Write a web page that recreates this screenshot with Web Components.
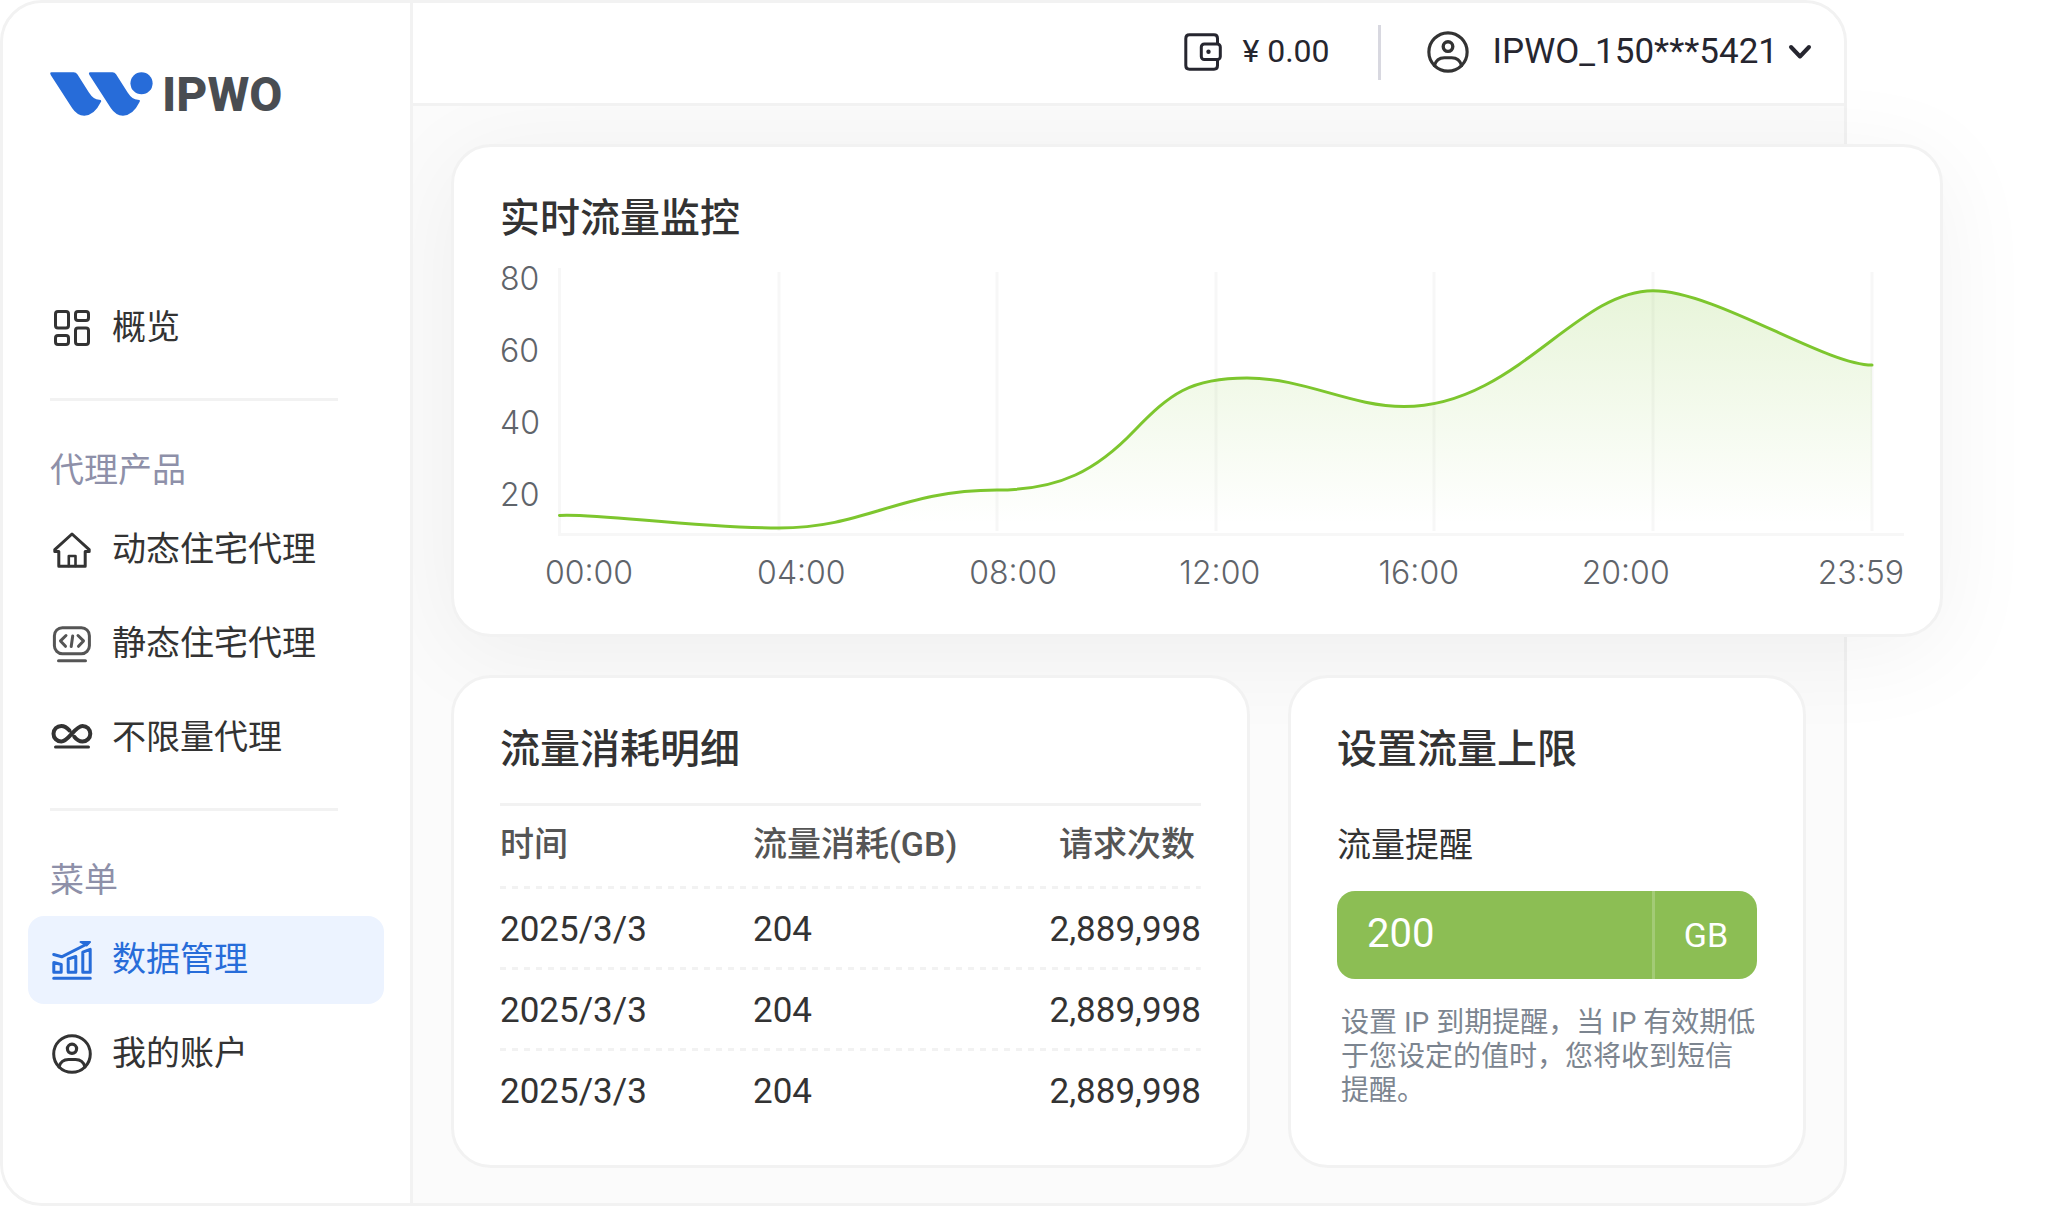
<!DOCTYPE html>
<html lang="zh-CN">
<head>
<meta charset="UTF-8">
<meta name="viewport" content="width=device-width, initial-scale=1.0">
<title>IPWO</title>
<style>
    body {
        --line: #f2f2f2;
        --blue: #276cd9;
        --green: #8cbe54;
        margin: 0;
        background: #fff;
        color: #333;
        font-family: Roboto, "Noto Sans CJK SC", sans-serif;
        font-size: 34px;
        line-height: 48px;
    }
</style>
</head>
<body>
<app-shell>
    <app-sidebar slot="sidebar"></app-sidebar>
    <app-header slot="header"></app-header>
    <panel-card heading="实时流量监控" wide><traffic-chart></traffic-chart></panel-card>
    <panel-card heading="流量消耗明细"><usage-table></usage-table></panel-card>
    <panel-card heading="设置流量上限"><limit-form></limit-form></panel-card>
</app-shell>

<script>
const USER_ICON = `
    <circle cx="22" cy="22" r="18.3"/>
    <circle cx="22" cy="16.8" r="4.6" stroke-width="3.2"/>
    <path d="M9 35C10.5 29.5 14.5 27.5 18.5 27.5h7C29.5 27.5 33.5 29.5 35 35"/>`;

const ICONS = {
    grid: `
        <rect x="5.5" y="5.5" width="13" height="16.5" rx="2.5"/>
        <rect x="5.5" y="29.5" width="13" height="9" rx="2.5"/>
        <rect x="25.5" y="5.5" width="13" height="9" rx="2.5"/>
        <rect x="25.5" y="22" width="13" height="16.5" rx="2.5"/>`,
    home: `
        <path d="M22 6L4.8 21.6V23.5H8.8V38.2H35.2V23.5H39.2V21.6Z"/>
        <path d="M18.8 38V28H25.5V38" stroke-width="2.6"/>`,
    code: `
        <g stroke="#555">
            <rect x="4.4" y="5.7" width="35" height="26" rx="8"/>
            <path d="M16 13.5L10.5 18.9L15.5 24.3M28 13.5L33.5 18.9L28.5 24.3M22.7 14L21.2 24.5M8.5 38.7H35.5"/>
        </g>`,
    infinity: `
        <path stroke-width="4" d="M19.5 14.5C17 11.5 14.5 9.9 11.3 9.9a7.8 7.8 0 0 0 0 15.6C18.5 25.5 25 9.9 32.5 9.9a7.8 7.8 0 0 1 0 15.6C29 25.5 26.5 23.7 24.3 20.8"/>
        <path d="M5.5 31H38.5"/>`,
    chart: `
        <path d="M3.8 24.5L11.2 26.5V34.2H3.8ZM18.2 21L25.8 18.5V34.2H18.2ZM32.8 14.2L40.2 11.3V34.2H32.8Z"/>
        <path d="M3.7 40.3H40.3M3.7 16.5L11.7 18.8L37 6"/>
        <path d="M30.5 4H40L36.5 7.5Z" fill="currentColor" stroke-width="2"/>`,
    user: USER_ICON
};

class AppShell extends HTMLElement {
    connectedCallback() {
        this.attachShadow({ mode: 'open' });
        this.shadowRoot.innerHTML = `
            <style>
                :host {
                    display: grid;
                    grid-template-columns: 410px 1fr;
                    box-sizing: border-box;
                    min-height: 100vh;
                    margin-right: 203px;
                    border: 3px solid var(--line);
                    border-radius: 42px;
                    background: #fbfbfb;
                }
                .content { display: flex; flex-direction: column; min-width: 0; }
                main {
                    flex: 1;
                    display: grid;
                    grid-template-columns: 799fr 518fr;
                    grid-auto-rows: 1fr;
                    gap: 38px;
                    padding: 38px 38px 35px;
                }
            </style>
            <slot name="sidebar"></slot>
            <div class="content">
                <slot name="header"></slot>
                <main><slot></slot></main>
            </div>
        `;
    }
}

class BrandLogo extends HTMLElement {
    connectedCallback() {
        this.attachShadow({ mode: 'open' });
        this.shadowRoot.innerHTML = `
            <style>
                :host { display: flex; gap: 9px; color: #494d52; font-size: 48px; font-weight: 800; line-height: 46px; }
                svg { width: 103px; height: 44px; }
            </style>
            <svg viewBox="150 215 310 133" fill="#276cd9" aria-hidden="true">
                <path id="stroke" d="M154 216H221Q228 216 232 222L267 277Q281 299 298 299Q307 299 303 306Q283 347 253 347Q231 347 216 324L152 225Q147 216 154 216Z"/>
                <use href="#stroke" x="117"/>
                <circle cx="426" cy="249" r="33.5"/>
            </svg>
            <span>IPWO</span>
        `;
    }
}

class NavItem extends HTMLElement {
    connectedCallback() {
        const active = this.hasAttribute('active');
        this.attachShadow({ mode: 'open' });
        this.shadowRoot.innerHTML = `
            <style>
                :host { display: block; }
                a {
                    display: flex;
                    align-items: center;
                    gap: 18px;
                    height: 88px;
                    padding-left: 22px;
                    border-radius: 16px;
                    color: inherit;
                    text-decoration: none;
                }
                a[aria-current] { background: #ecf3ff; color: var(--blue); }
                svg { width: 44px; height: 44px; flex: none; }
                span { padding-bottom: 3px; }
            </style>
            <a href="#${this.getAttribute('icon')}" ${active ? 'aria-current="page"' : ''}>
                <svg viewBox="0 0 44 44" fill="none" stroke="currentColor" stroke-width="3" stroke-linecap="round" stroke-linejoin="round" aria-hidden="true">${ICONS[this.getAttribute('icon')]}</svg>
                <span><slot></slot></span>
            </a>
        `;
    }
}

class AppSidebar extends HTMLElement {
    connectedCallback() {
        this.attachShadow({ mode: 'open' });
        this.shadowRoot.innerHTML = `
            <style>
                :host {
                    position: relative;
                    z-index: 1;
                    box-sizing: border-box;
                    padding: 69px 26px 0 25px;
                    border-right: 3px solid var(--line);
                    border-radius: 39px 0 0 39px;
                    background: #fff;
                }
                brand-logo { margin: 0 22px 166px; }
                nav { display: flex; flex-direction: column; gap: 6px; }
                hr { margin: 26px 46px 45px 22px; border: 0; height: 3px; background: var(--line); }
                h2 { margin: 0 22px 12px; color: #8e90a9; font-size: 34px; font-weight: 400; line-height: 48px; }
            </style>
            <brand-logo></brand-logo>
            <nav><nav-item icon="grid">概览</nav-item></nav>
            <hr>
            <h2>代理产品</h2>
            <nav>
                <nav-item icon="home">动态住宅代理</nav-item>
                <nav-item icon="code">静态住宅代理</nav-item>
                <nav-item icon="infinity">不限量代理</nav-item>
            </nav>
            <hr>
            <h2>菜单</h2>
            <nav>
                <nav-item icon="chart" active>数据管理</nav-item>
                <nav-item icon="user">我的账户</nav-item>
            </nav>
        `;
    }
}

class AppHeader extends HTMLElement {
    connectedCallback() {
        this.attachShadow({ mode: 'open' });
        this.shadowRoot.innerHTML = `
            <style>
                :host {
                    position: relative;
                    z-index: 1;
                    display: flex;
                    align-items: center;
                    justify-content: flex-end;
                    box-sizing: border-box;
                    height: 103px;
                    padding: 0 32px 2px 0;
                    border-bottom: 3px solid var(--line);
                    border-radius: 0 39px 0 0;
                    background: #fff;
                    color: #26262f;
                }
                svg { flex: none; }
                .balance { display: flex; align-items: center; gap: 20px; font-size: 32px; }
                .balance span { padding-bottom: 2px; }
                .divider { width: 3px; height: 55px; margin: 0 44px 0 48px; background: #d8d8e0; }
                button {
                    display: flex;
                    align-items: center;
                    padding: 0;
                    border: 0;
                    background: none;
                    color: inherit;
                    font: inherit;
                    font-size: 35px;
                    cursor: pointer;
                }
                button span { margin: 0 10px 0 22px; }
            </style>
            <div class="balance">
                <svg width="38" height="38" viewBox="0 0 38 38" fill="none" stroke="currentColor" stroke-width="3" aria-hidden="true">
                    <path d="M33.5 10V5.5Q33.5 1.8 30 1.8H5.5Q1.8 1.8 1.8 5.5V32.5Q1.8 36.2 5.5 36.2H30Q33.5 36.2 33.5 32.5V27"/>
                    <rect x="17.3" y="11" width="19" height="15.5" rx="3"/>
                    <circle cx="24.5" cy="18.8" r="2.2" fill="currentColor" stroke="none"/>
                </svg>
                <span>¥ 0.00</span>
            </div>
            <div class="divider"></div>
            <button type="button">
                <svg width="46" height="46" viewBox="0 0 44 44" fill="none" stroke="#333" stroke-width="3" stroke-linecap="round" aria-hidden="true">${USER_ICON}</svg>
                <span>IPWO_150***5421</span>
                <svg width="24" height="16" viewBox="0 0 24 16" fill="none" stroke="currentColor" stroke-width="4" stroke-linecap="round" stroke-linejoin="round" aria-hidden="true"><path d="M3 3L12 12.5L21 3"/></svg>
            </button>
        `;
    }
}

class PanelCard extends HTMLElement {
    connectedCallback() {
        this.attachShadow({ mode: 'open' });
        this.shadowRoot.innerHTML = `
            <style>
                :host {
                    display: block;
                    box-sizing: border-box;
                    min-width: 0;
                    padding: 44px 46px 32px;
                    border: 3px solid var(--line);
                    border-radius: 40px;
                    background: #fff;
                }
                /* the chart card hangs over the right edge of the shell */
                :host([wide]) {
                    grid-column: 1 / -1;
                    margin-right: -137px;
                    padding-right: 36px;
                    box-shadow: 0 16px 100px rgba(0, 0, 0, 0.055);
                }
                h1 { margin: 0; font-size: 40px; font-weight: 500; line-height: 56px; }
            </style>
            <h1>${this.getAttribute('heading')}</h1>
            <slot></slot>
        `;
    }
}

class TrafficChart extends HTMLElement {
    connectedCallback() {
        const curve = 'M1.5 247.4C42 245 132 260 221 260C308 260 342 222 439 222C502 222 539 202 577 162C612 126 632 110 689 110C747 110 792 138.5 846 138.5C957 138.5 1017 22.7 1095 22.7C1157 22.7 1267 97 1314 97';
        const lines = [221, 439, 658, 876, 1095, 1314];
        this.attachShadow({ mode: 'open' });
        this.shadowRoot.innerHTML = `
            <style>
                :host { display: block; margin-top: 14px; color: #5f646a; font: 300 32px/36px Inter, sans-serif; }
                .plot { display: grid; grid-template-columns: 58px 1fr; }
                .y { display: flex; flex-direction: column; gap: 36px; }
                svg { width: 100%; height: 268px; margin-top: 7px; }
                .x {
                    display: grid;
                    grid-template-columns: 213fr 213fr 211fr 200fr 204fr 237fr auto;
                    margin: 19px 0 0 45px;
                }
            </style>
            <div class="plot">
                <div class="y"><span>80</span><span>60</span><span>40</span><span>20</span></div>
                <svg viewBox="0 0 1346 268" preserveAspectRatio="none" fill="none" role="img" aria-label="实时流量监控">
                    <defs>
                        <linearGradient id="fade" gradientUnits="userSpaceOnUse" x1="0" y1="22" x2="0" y2="256">
                            <stop stop-color="#7dc62e" stop-opacity="0.18"/>
                            <stop offset="1" stop-color="#7dc62e" stop-opacity="0"/>
                        </linearGradient>
                    </defs>
                    <path d="M1.5 0V266.5H1346" stroke="#f7f7f7" stroke-width="3"/>
                    ${lines.map(x => `<path d="M${x} 4V263" stroke="#f7f7f7" stroke-width="3"/>`).join('')}
                    <path d="${curve}V264H1.5Z" fill="url(#fade)"/>
                    <path d="${curve}" stroke="#7dc62e" stroke-width="3" stroke-linecap="round"/>
                </svg>
            </div>
            <div class="x">
                <span>00:00</span><span>04:00</span><span>08:00</span><span>12:00</span><span>16:00</span><span>20:00</span><span>23:59</span>
            </div>
        `;
    }
}

class UsageTable extends HTMLElement {
    connectedCallback() {
        const rows = [
            ['2025/3/3', '204', '2,889,998'],
            ['2025/3/3', '204', '2,889,998'],
            ['2025/3/3', '204', '2,889,998']
        ];
        this.attachShadow({ mode: 'open' });
        this.shadowRoot.innerHTML = `
            <style>
                :host { display: block; margin-top: 25px; border-top: 3px solid var(--line); }
                table { width: 100%; border-collapse: collapse; }
                th, td { box-sizing: border-box; padding: 0; text-align: left; font-weight: 400; }
                th { height: 83px; padding-bottom: 7px; color: #555; font-weight: 500; }
                td { height: 81px; font-size: 35px; }
                th:first-child { width: 253px; }
                th:last-child { padding-right: 6px; }
                th:last-child, td:last-child { text-align: right; }
                tr:not(.last) {
                    background: repeating-linear-gradient(90deg, var(--line) 0 6px, transparent 6px 12px) left bottom / 100% 3px no-repeat;
                }
            </style>
            <table>
                <thead><tr><th>时间</th><th>流量消耗(GB)</th><th>请求次数</th></tr></thead>
                <tbody>
                    ${rows.map((r, i) => `<tr class="${i === rows.length - 1 ? 'last' : ''}">${r.map(c => `<td>${c}</td>`).join('')}</tr>`).join('')}
                </tbody>
            </table>
        `;
    }
}

class LimitForm extends HTMLElement {
    connectedCallback() {
        this.attachShadow({ mode: 'open' });
        this.shadowRoot.innerHTML = `
            <style>
                :host { display: block; margin-top: 43px; }
                label { display: block; }
                .field {
                    display: flex;
                    height: 88px;
                    margin-top: 22px;
                    border-radius: 18px;
                    background: var(--green);
                    color: #fff;
                }
                input {
                    flex: 1;
                    min-width: 0;
                    padding: 0 30px 2px;
                    border: 0;
                    outline: 0;
                    background: none;
                    color: inherit;
                    font: inherit;
                    font-size: 40px;
                }
                .unit {
                    display: flex;
                    align-items: center;
                    justify-content: center;
                    width: 102px;
                    border-left: 3px solid #a3cb76;
                }
                p { margin: 27px 0 0; padding-left: 4px; color: #7c8590; font-size: 28px; line-height: 34px; }
            </style>
            <label for="limit">流量提醒</label>
            <div class="field">
                <input id="limit" type="text" inputmode="numeric" value="200">
                <span class="unit">GB</span>
            </div>
            <p>设置 IP 到期提醒，当 IP 有效期低于您设定的值时，您将收到短信提醒。</p>
        `;
    }
}

customElements.define('app-shell', AppShell);
customElements.define('brand-logo', BrandLogo);
customElements.define('nav-item', NavItem);
customElements.define('app-sidebar', AppSidebar);
customElements.define('app-header', AppHeader);
customElements.define('panel-card', PanelCard);
customElements.define('traffic-chart', TrafficChart);
customElements.define('usage-table', UsageTable);
customElements.define('limit-form', LimitForm);
</script>
</body>
</html>
